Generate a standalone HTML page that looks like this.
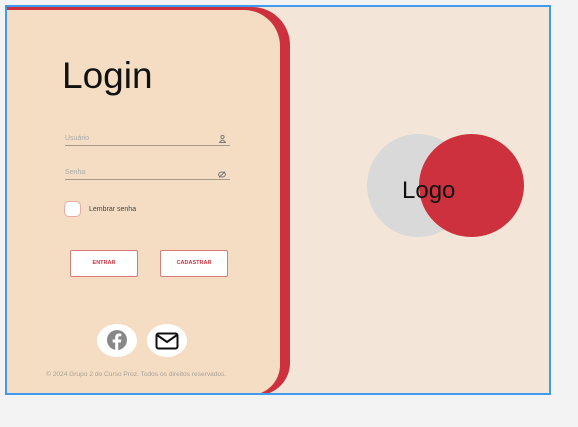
<!DOCTYPE html>
<html><head><meta charset="utf-8"><style>
*{margin:0;padding:0;box-sizing:border-box}
body{width:578px;height:427px;background:#f3f3f3;position:relative;overflow:hidden;font-family:"Liberation Sans",sans-serif}
.frame{position:absolute;left:5px;top:5px;width:546px;height:390px;border:2px solid #3d9cf0;background:#f3e6d8;overflow:hidden}
.red{position:absolute;left:0;top:0;width:283px;height:388px;background:#cc313d;border-radius:0 38px 32px 0}
.panel{position:absolute;left:0;top:3px;width:273px;height:385px;background:#f4ddc2;border-radius:0 36px 30px 0}
.title{position:absolute;left:55px;top:48px;font-size:37px;color:#111}
.field{position:absolute;left:58px;width:165px;border-bottom:1.5px solid #a89a88;font-size:7px;color:#aaa;height:13px;padding-top:2px}
.cb{position:absolute;left:57px;top:194px;width:17px;height:16px;background:#fff;border:1px solid #e9a9a4;border-radius:5px}
.btn{position:absolute;top:243px;width:68px;height:27px;background:#fff;border:1.5px solid #d97c78;border-radius:2px;font-size:5.5px;font-weight:bold;color:#cc313d;text-align:center;line-height:24px}
.ic{position:absolute;top:317px;width:40px;height:33px;background:#fff;border-radius:50%}
</style></head><body>
<div class="frame">
<div class="red"></div>
<div class="panel"></div>
<div class="title">Login</div>
<div class="field" style="top:126px">Usuário<svg style="position:absolute;right:4px;top:2px" width="7" height="8" viewBox="0 0 7 8"><circle cx="3.5" cy="2" r="1.6" fill="none" stroke="#777"/><path d="M0.5 7.5 Q3.5 3 6.5 7.5Z" fill="none" stroke="#777"/></svg></div>
<div class="field" style="top:160px">Senha<svg style="position:absolute;right:4px;top:4px" width="8" height="7" viewBox="0 0 8 7"><ellipse cx="4" cy="3.5" rx="3.5" ry="2.5" fill="none" stroke="#777"/><path d="M1 6.5L7 0.5" stroke="#777"/></svg></div>
<div class="cb"></div>
<div style="position:absolute;left:82px;top:199px;font-size:7px;color:#444">Lembrar senha</div>
<div class="btn" style="left:63px">ENTRAR</div>
<div class="btn" style="left:153px">CADASTRAR</div>
<div class="ic" style="left:90px"><svg style="position:absolute;left:9px;top:5px" width="22" height="22" viewBox="0 0 22 22"><circle cx="11" cy="11" r="10" fill="#888"/><path d="M12.2 21V13.5h2.6l.4-3h-3V8.7c0-.9.3-1.5 1.5-1.5h1.6V4.6c-.3 0-1.2-.1-2.3-.1-2.3 0-3.8 1.4-3.8 3.9v2.1H6.6v3h2.6V21z" fill="#fff"/></svg></div>
<div class="ic" style="left:140px"><svg style="position:absolute;left:8px;top:8px" width="24" height="18" viewBox="0 0 24 18"><rect x="1.5" y="1.5" width="21" height="15" rx="2" fill="none" stroke="#111" stroke-width="2"/><path d="M2 3l10 7 10-7" fill="none" stroke="#111" stroke-width="2"/></svg></div>
<div style="position:absolute;left:39px;top:364px;font-size:6.6px;color:#a9a29a">© 2024 Grupo 2 do Curso Proz. Todos os direitos reservados.</div>
<div style="position:absolute;left:360px;top:127px;width:102px;height:103px;border-radius:50%;background:#d9d9d9"></div>
<div style="position:absolute;left:412px;top:127px;width:105px;height:103px;border-radius:50%;background:#cc313d"></div>
<div style="position:absolute;left:395px;top:170px;font-size:24px;color:#111">Logo</div>
</div>
</body></html>
